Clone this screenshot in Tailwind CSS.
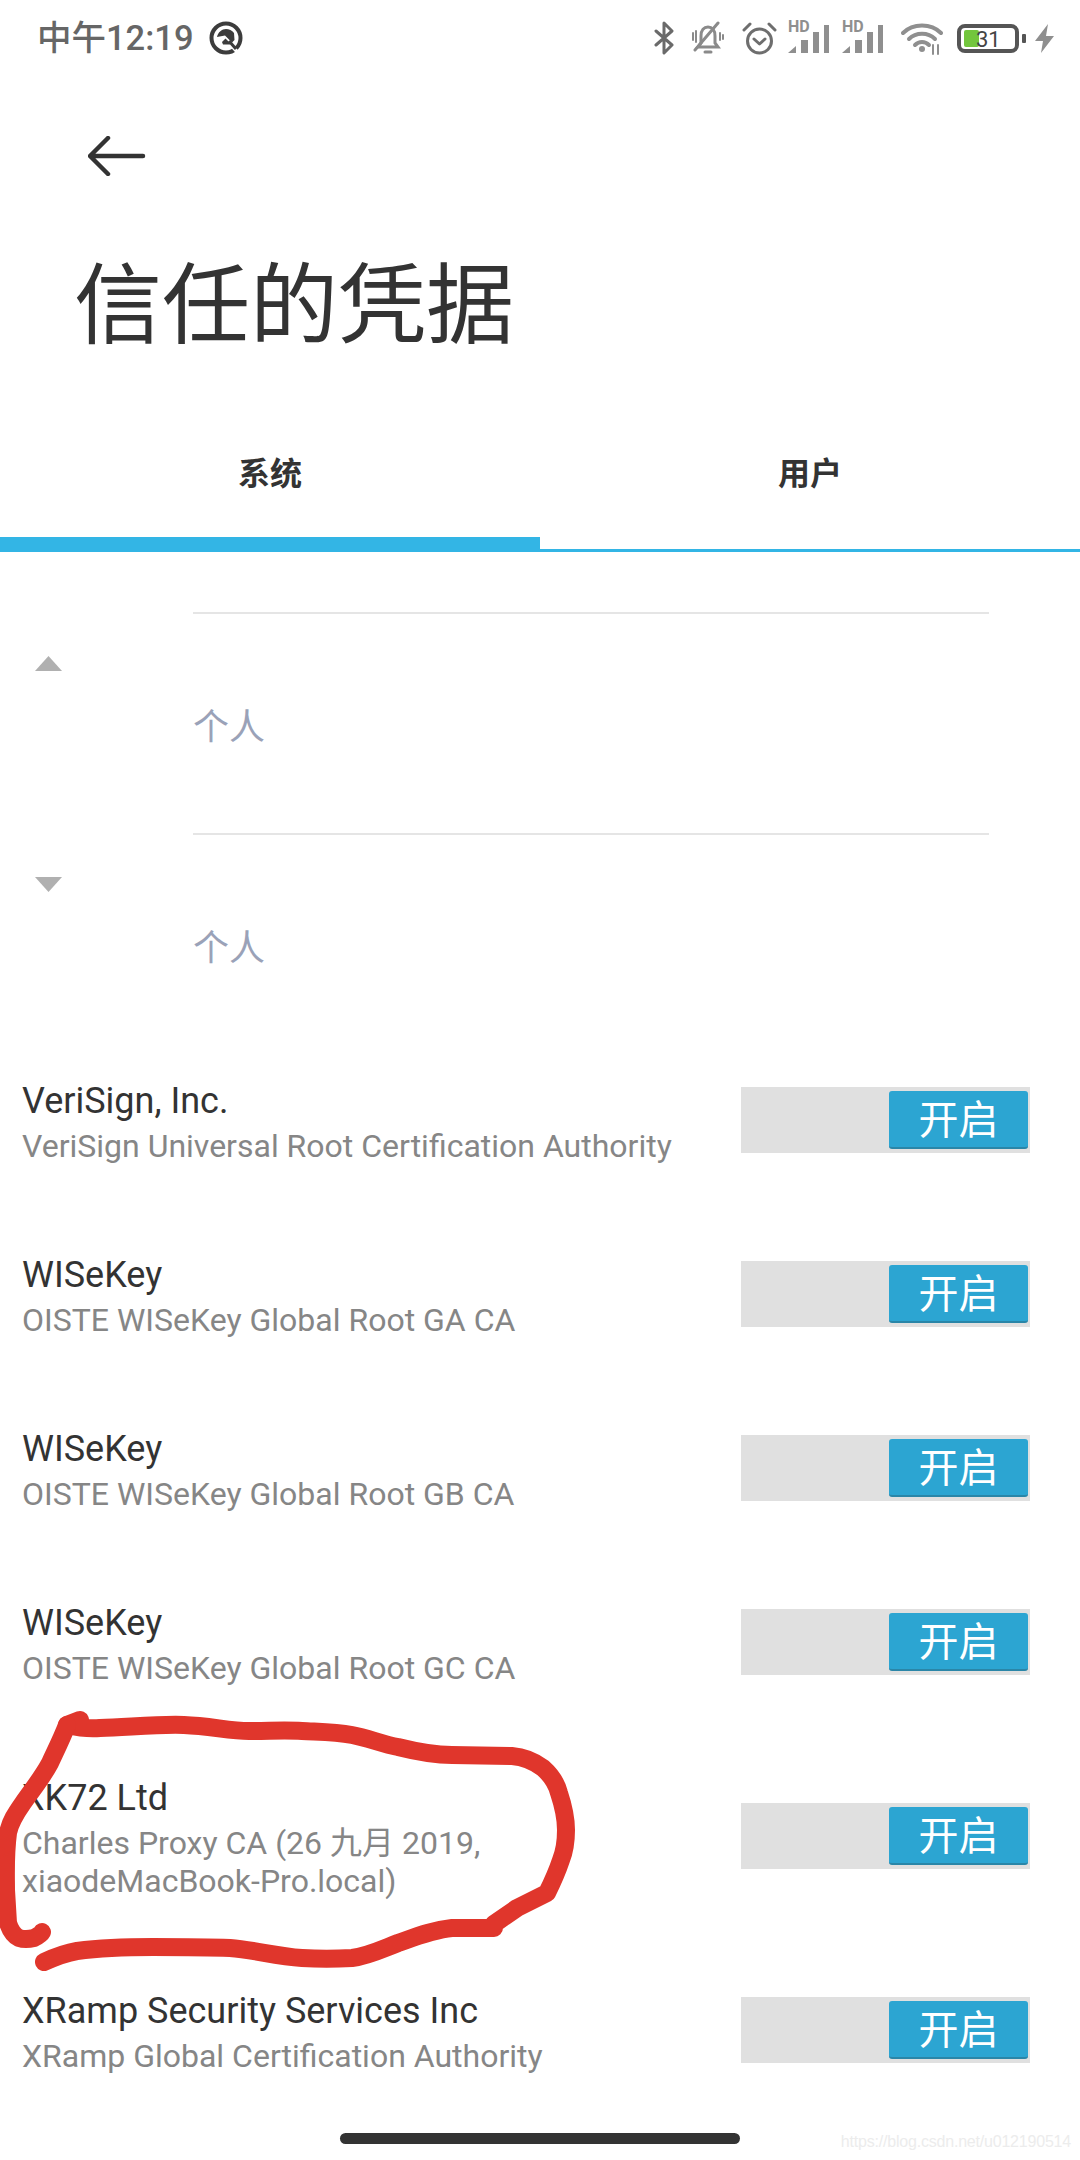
<!DOCTYPE html>
<html lang="zh-CN">
<head>
  <meta charset="UTF-8">
  <title>信任的凭据</title>
  <script src="https://cdn.jsdelivr.net/npm/@tailwindcss/browser@4"></script>
</head>
<body class="relative bg-white w-[1080px] h-[2160px] overflow-hidden font-['Roboto','Noto_Sans_CJK_SC',sans-serif]">

  <!-- status bar -->
  <div class="flex items-center justify-between h-[76px] pl-[37px] pr-[26px]">
    <div class="flex items-center gap-[15px]">
      <span class="text-[34.5px] leading-none font-medium text-[#666666]">中午12:19</span>
      <svg class="w-[34px] h-[34px]" viewBox="0 0 34 34">
        <circle cx="17" cy="17" r="14.5" fill="none" stroke="#3c3c3c" stroke-width="4"/>
        <path d="M8 16 C9 11 13 8 17 8 C20 8 23 9.500 25 12 L25.500 19 L23 21.500 L16 14.500Z" fill="#3c3c3c"/>
        <path d="M13 21 L16.500 17.500 L21 22 L21 23.500 L14 23.500Z" fill="#3c3c3c"/>
        <path d="M22 24 L31 34" stroke="#ffffff" stroke-width="3.500"/>
        <path d="M20 20 L27 28" stroke="#3c3c3c" stroke-width="3"/>
      </svg>
    </div>
    <div class="flex items-center">
      <!-- bluetooth -->
      <svg class="w-[20px] h-[34px]" viewBox="0 0 20 34" fill="none" stroke="#6a6a6a" stroke-width="3" stroke-linecap="round" stroke-linejoin="round">
        <path d="M2 10 L18 24 L10 32 L10 2 L18 10 L2 24"/>
      </svg>
      <!-- silent bell -->
      <svg class="w-[34px] h-[34px] ml-[17px]" viewBox="0 0 34 34" fill="none" stroke="#8a8a8a" stroke-width="3" stroke-linecap="round">
        <path d="M10 22 L10 15 C10 9 13 6 17 6 C21 6 24 9 24 15 L24 22 L27 26 L7 26Z"/>
        <path d="M14 31 L20 31" stroke-width="3"/>
        <path d="M4 29 L27 2"/>
        <path d="M2 12 L2 19 M5 10 L5 21 M29 12 L29 19 M32 14 L32 18" stroke-width="2"/>
      </svg>
      <!-- alarm -->
      <svg class="w-[35px] h-[34px] ml-[17px]" viewBox="0 0 35 34" fill="none" stroke="#6e6e6e" stroke-width="3" stroke-linecap="round" stroke-linejoin="round">
        <circle cx="17.5" cy="20" r="12"/>
        <path d="M12 18 L17.5 23 L23 18"/>
        <path d="M2 9 L8 3 M33 9 L27 3"/>
      </svg>
      <!-- signal 1 -->
      <div class="relative w-[41px] h-[32px] ml-[11px]">
        <svg class="absolute inset-0 w-[41px] h-[32px]" viewBox="0 0 41 32" fill="#8f8f8f">
          <path d="M0 31 L8 24 L8 31Z"/><rect x="13" y="18" width="7" height="13"/><rect x="25" y="10" width="6" height="21"/><rect x="36" y="3" width="5" height="28"/>
        </svg>
        <span class="absolute left-0 top-[-4px] text-[16px] leading-[18px] font-bold text-[#8f8f8f]">HD</span>
      </div>
      <!-- signal 2 -->
      <div class="relative w-[41px] h-[32px] ml-[13px]">
        <svg class="absolute inset-0 w-[41px] h-[32px]" viewBox="0 0 41 32" fill="#8f8f8f">
          <path d="M0 31 L8 24 L8 31Z"/><rect x="13" y="18" width="7" height="13"/><rect x="25" y="10" width="6" height="21"/><rect x="36" y="3" width="5" height="28"/>
        </svg>
        <span class="absolute left-0 top-[-4px] text-[16px] leading-[18px] font-bold text-[#8f8f8f]">HD</span>
      </div>
      <!-- wifi -->
      <svg class="w-[42px] h-[34px] ml-[18px]" viewBox="0 0 42 34" fill="none" stroke="#8f8f8f" stroke-width="4" stroke-linecap="round">
        <path d="M2 12 C12 2 30 2 40 12"/>
        <path d="M8 18 C15 11 27 11 34 18"/>
        <path d="M14 24 C18 20 24 20 28 24"/>
        <circle cx="21" cy="28" r="3" fill="#8f8f8f" stroke="none"/>
        <path d="M32 24 L32 33 M37 24 L37 33" stroke-width="2"/>
      </svg>
      <!-- battery -->
      <div class="relative flex items-center w-[62px] h-[29px] ml-[14px] border-[4px] border-[#555555] rounded-[8px] overflow-hidden">
        <div class="w-[15px] h-[17px] ml-[3px] bg-[#72c63c] rounded-[2px]"></div>
        <span class="absolute left-[15px] top-0 text-[22px] leading-[23px] text-[#444444]">31</span>
      </div>
      <div class="w-[4px] h-[9px] ml-[3px] bg-[#555555] rounded-[1px]"></div>
      <!-- bolt -->
      <svg class="w-[19px] h-[29px] ml-[9px]" viewBox="0 0 19 29" fill="#8f8f8f">
        <path d="M13 0 L0 17 L8 17 L6 29 L19 12 L11 12Z"/>
      </svg>
    </div>
  </div>

  <!-- back arrow -->
  <div class="pl-[88px] pt-[60px]">
    <svg class="block w-[58px] h-[40px]" viewBox="0 0 58 40" fill="none" stroke="#333333" stroke-width="4.500" stroke-linecap="round" stroke-linejoin="round">
      <path d="M55 20 L3 20 M20 2 L2 20 L20 38"/>
    </svg>
  </div>

  <!-- title -->
  <h1 class="pl-[74px] mt-[80px] text-[88px] leading-[100px] font-normal text-[#333333]">信任的凭据</h1>

  <!-- tabs -->
  <div class="grid grid-cols-2 mt-[51px] h-[145px]">
    <div class="flex justify-center pt-[45px] text-[32px] leading-[44px] font-bold text-[#333333] border-b-[15px] border-[#33b5e5]">系统</div>
    <div class="flex justify-center pt-[45px] text-[32px] leading-[44px] font-bold text-[#333333] border-b-[3px] border-[#33b5e5] h-[145px]">用户</div>
  </div>

  <!-- sections -->
  <div class="mt-[60px]">
    <div class="flex h-[221px]">
      <div class="w-[193px] pl-[35px] pt-[44px]">
        <div class="w-[27px] h-[15px] bg-[#b0b0b0] [clip-path:polygon(50%_0,100%_100%,0_100%)]"></div>
      </div>
      <div class="w-[796px] border-t-2 border-[#e5e5e5] pt-[90px]">
        <span class="block text-[36px] leading-[48px] text-[#9aa2b8]">个人</span>
      </div>
    </div>
    <div class="flex h-[221px]">
      <div class="w-[193px] pl-[35px] pt-[44px]">
        <div class="w-[27px] h-[15px] bg-[#b0b0b0] [clip-path:polygon(0_0,100%_0,50%_100%)]"></div>
      </div>
      <div class="w-[796px] border-t-2 border-[#e5e5e5] pt-[90px]">
        <span class="block text-[36px] leading-[48px] text-[#9aa2b8]">个人</span>
      </div>
    </div>
  </div>

  <!-- certificates -->
  <div id="certs" class="-mt-[21px]"></div>

  <!-- pen scribble over the screenshot -->
  <svg class="absolute left-0 top-[1700px] w-[600px] h-[290px]" viewBox="0 1700 600 290" fill="none" stroke="#e0362c" stroke-width="18" stroke-linecap="round" stroke-linejoin="round">
    <path d="M80 1720 L67 1725 C80 1728 90 1729 100 1728 C130 1727 160 1724 184 1725 C210 1726 230 1731 249 1731 C270 1731 285 1730 302 1731 C320 1732 335 1732 352 1735 C368 1738 382 1744 398 1747 C418 1752 435 1755 452 1755 L512 1756 C525 1757 535 1762 543 1768 C552 1776 557 1785 559 1793 C564 1808 566 1818 566 1830 C566 1842 565 1850 561 1860 C557 1872 552 1883 547 1893 L517 1908 L494 1924 L494 1928 L452 1928 C432 1930 415 1937 398 1943 C380 1950 368 1956 352 1958 C335 1959 318 1959 302 1958 C275 1956 255 1950 230 1948 C205 1947 178 1947 153 1947 C125 1947 100 1948 77 1951 C65 1953 55 1957 44 1962"/>
    <path d="M67 1725 C62 1738 56 1750 50 1763 C42 1778 32 1790 23 1803 C16 1813 10 1822 8 1833 C5 1855 6 1875 6 1890 L8 1923 C11 1932 15 1936 19 1938 C25 1940 30 1939 34 1938 C38 1936 41 1934 42 1932"/>
  </svg>

  <!-- home indicator + watermark -->
  <div class="absolute left-[340px] top-[2133px] w-[400px] h-[11px] bg-[#333333] rounded-full"></div>
  <span class="absolute right-[9px] top-[2132px] text-[16px] leading-[20px] tracking-[-0.2px] text-[#ececec] font-['Liberation_Sans']">https://blog.csdn.net/u012190514</span>

<script>
const certs = [
  { title: 'VeriSign, Inc.', sub: 'VeriSign Universal Root Certification Authority' },
  { title: 'WISeKey', sub: 'OISTE WISeKey Global Root GA CA' },
  { title: 'WISeKey', sub: 'OISTE WISeKey Global Root GB CA' },
  { title: 'WISeKey', sub: 'OISTE WISeKey Global Root GC CA' },
  { title: 'XK72 Ltd', sub: 'Charles Proxy CA (26 九月 2019,<br>xiaodeMacBook-Pro.local)' },
  { title: 'XRamp Security Services Inc', sub: 'XRamp Global Certification Authority' },
];

const box = document.getElementById('certs');
certs.forEach(c => {
  const height = c.sub.includes('<br>') ? 'h-[214px]' : 'h-[174px]';
  box.insertAdjacentHTML('beforeend', `
    <div class="flex items-center justify-between pl-[22px] pr-[50px] ${height}">
      <div class="pt-[4px]">
        <div class="text-[36px] leading-[44px] text-[#333333]">${c.title}</div>
        <div class="mt-[4px] text-[32px] leading-[38px] text-[#868686]">${c.sub}</div>
      </div>
      <div class="flex justify-end items-center w-[289px] h-[66px] pr-[2px] bg-[#e0e0e0]">
        <div class="flex items-center justify-center w-[139px] h-[58px] pt-[3px] rounded-[3px] bg-[#2ca5d2] border-b-2 border-[#2a86a8] text-[40px] leading-none text-white">开启</div>
      </div>
    </div>`);
});
</script>

</body>
</html>
